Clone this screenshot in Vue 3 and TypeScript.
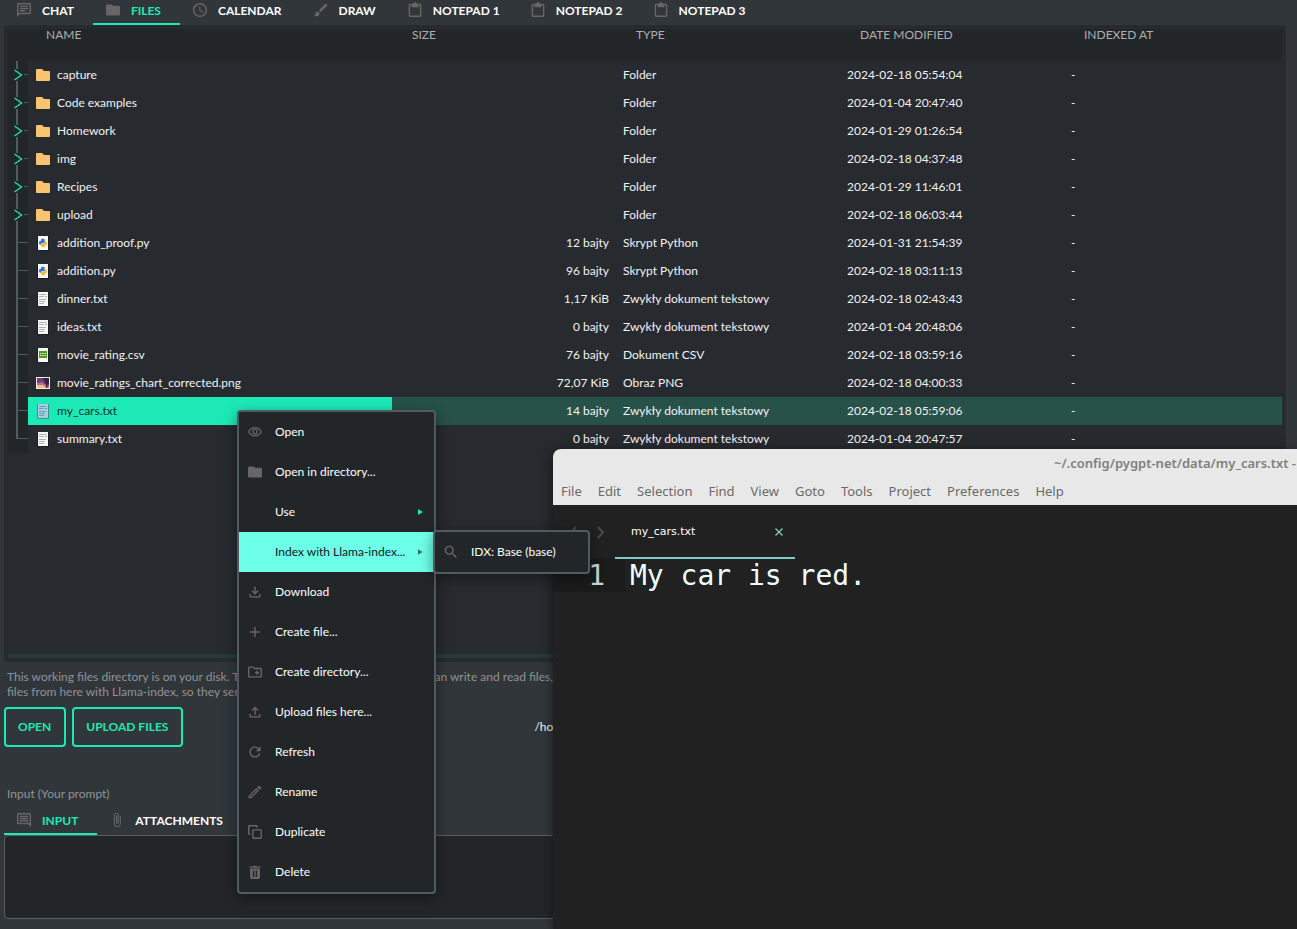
<script setup lang="ts">
import { ref } from 'vue'

interface FileRow {
  name: string
  kind: 'folder' | 'py' | 'txt' | 'csv' | 'png'
  size: string
  type: string
  modified: string
}

interface MenuItem {
  label: string
  icon?: string
  children?: { label: string; icon: string }[]
}

const icons: Record<string, string> = {
  chat: 'M4 4h16v12H5.17L4 17.17V4m0-2c-1.1 0-1.99.9-1.99 2L2 22l4-4h14c1.1 0 2-.9 2-2V4c0-1.1-.9-2-2-2H4zm2 10h8v2H6v-2zm0-3h12v2H6V9zm0-3h12v2H6V6z',
  folder: 'M10 4H4c-1.1 0-1.99.9-1.99 2L2 18c0 1.1.9 2 2 2h16c1.1 0 2-.9 2-2V8c0-1.1-.9-2-2-2h-8l-2-2z',
  clock: 'M11.99 2C6.47 2 2 6.48 2 12s4.47 10 9.99 10C17.52 22 22 17.52 22 12S17.52 2 11.99 2zM12 20c-4.42 0-8-3.58-8-8s3.58-8 8-8 8 3.58 8 8-3.58 8-8 8zm.5-13H11v6l5.25 3.15.75-1.23-4.5-2.67z',
  brush: 'M7 14c-1.66 0-3 1.34-3 3 0 1.31-1.16 2-2 2 .92 1.22 2.49 2 4 2 2.21 0 4-1.79 4-4 0-1.66-1.34-3-3-3zm13.71-9.37l-1.34-1.34c-.39-.39-1.02-.39-1.41 0L9 12.25 11.75 15l8.96-8.96c.39-.39.39-1.02 0-1.41z',
  clipboard: 'M19 3h-4.18C14.4 1.84 13.3 1 12 1c-1.3 0-2.4.84-2.82 2H5c-1.1 0-2 .9-2 2v15c0 1.1.9 2 2 2h14c1.1 0 2-.9 2-2V5c0-1.1-.9-2-2-2zm0 17H5V5h2v3h10V5h2v15z',
  comment: 'M21.99 4c0-1.1-.89-2-1.99-2H4c-1.1 0-2 .9-2 2v12c0 1.1.9 2 2 2h14l4 4-.01-18zM20 4v13.17L18.83 16H4V4h16zM6 12h12v2H6v-2zm0-3h12v2H6V9zm0-3h12v2H6V6z',
  clip: 'M17.5 6v11.5c0 2.76-2.24 5-5 5s-5-2.24-5-5V5c0-1.93 1.57-3.5 3.5-3.5s3.5 1.57 3.5 3.5v10.5c0 1.1-.9 2-2 2s-2-.9-2-2V6H12v9.5c0 .3.2.5.5.5s.5-.2.5-.5V5c0-1.1-.9-2-2-2s-2 .9-2 2v12.500c0 1.93 1.57 3.5 3.5 3.5s3.500-1.57 3.500-3.5V6h1.500z',
  eye: 'M12 6c3.79 0 7.17 2.13 8.82 5.5C19.17 14.87 15.79 17 12 17s-7.17-2.13-8.82-5.5C4.83 8.13 8.21 6 12 6m0-2C7 4 2.73 7.11 1 11.500 2.73 15.89 7 19 12 19s9.27-3.11 11-7.5C21.27 7.11 17 4 12 4zm0 5c1.38 0 2.5 1.12 2.5 2.5S13.38 14 12 14s-2.5-1.12-2.5-2.5S10.62 9 12 9m0-2c-2.48 0-4.5 2.02-4.5 4.5S9.52 16 12 16s4.5-2.02 4.5-4.5S14.48 7 12 7z',
  download: 'M18 15v3H6v-3H4v3c0 1.1.9 2 2 2h12c1.1 0 2-.9 2-2v-3h-2zm-1-4l-1.41-1.41L13 12.17V4h-2v8.17L8.41 9.59 7 11l5 5 5-5z',
  upload: 'M18 15v3H6v-3H4v3c0 1.1.9 2 2 2h12c1.1 0 2-.9 2-2v-3h-2zM7 9l1.41 1.41L11 7.83V16h2V7.83l2.59 2.58L17 9l-5-5-5 5z',
  plus: 'M19 13h-6v6h-2v-6H5v-2h6V5h2v6h6v2z',
  newFolder: 'M20 6h-8l-2-2H4c-1.11 0-1.99.89-1.99 2L2 18c0 1.11.89 2 2 2h16c1.11 0 2-.89 2-2V8c0-1.11-.89-2-2-2zm0 12H4V6h5.170l2 2H20v10zm-8-4h2v2h2v-2h2v-2h-2v-2h-2v2h-2v2z',
  refresh: 'M17.65 6.35C16.2 4.9 14.21 4 12 4c-4.42 0-7.99 3.58-7.99 8s3.57 8 7.99 8c3.73 0 6.84-2.55 7.73-6h-2.08c-.82 2.33-3.04 4-5.65 4-3.31 0-6-2.69-6-6s2.69-6 6-6c1.66 0 3.14.69 4.22 1.78L13 11h7V4l-2.35 2.35z',
  pencil: 'M14.06 9.02l.92.92L5.92 19H5v-.92l9.06-9.06M17.66 3c-.25 0-.51.1-.7.29l-1.83 1.83 3.75 3.75 1.83-1.83c.39-.39.39-1.02 0-1.41l-2.34-2.34c-.2-.2-.45-.29-.71-.29zm-3.6 3.19L3 17.25V21h3.75L17.81 9.94l-3.75-3.75z',
  copy: 'M10 8h10c1.1 0 2 .9 2 2v10c0 1.1-.9 2-2 2H10c-1.1 0-2-.9-2-2V10c0-1.1.9-2 2-2zm0 2v10h10V10H10zM4 2h10c1.1 0 2 .9 2 2v2h-2V4H4v10h2v2H4c-1.1 0-2-.9-2-2V4c0-1.1.9-2 2-2z',
  trash: 'M5 7h14v13c0 1.100-.9 2-2 2H7c-1.100 0-2-.9-2-2V7zm4 3v9h2v-9H9zm4 0v9h2v-9h-2zM4 4h5l1-1h4l1 1h5v2H4z',
  search: 'M15.5 14h-.79l-.28-.27C15.41 12.59 16 11.11 16 9.5 16 5.91 13.09 3 9.5 3S3 5.91 3 9.5 5.91 16 9.5 16c1.61 0 3.09-.59 4.23-1.57l.27.28v.79l5 4.99L20.49 19l-4.99-5zm-6 0C7.01 14 5 11.99 5 9.5S7.01 5 9.5 5 14 7.01 14 9.5 11.99 14 9.5 14z',
}

const tabs = [
  { label: 'CHAT', icon: 'chat' },
  { label: 'FILES', icon: 'folder' },
  { label: 'CALENDAR', icon: 'clock' },
  { label: 'DRAW', icon: 'brush' },
  { label: 'NOTEPAD 1', icon: 'clipboard' },
  { label: 'NOTEPAD 2', icon: 'clipboard' },
  { label: 'NOTEPAD 3', icon: 'clipboard' },
]
const activeTab = ref('FILES')

const inputTabs = [
  { label: 'INPUT', icon: 'comment' },
  { label: 'ATTACHMENTS', icon: 'clip' },
]
const activeInputTab = ref('INPUT')

const text = 'Zwykły dokument tekstowy'
const files: FileRow[] = [
  { name: 'capture', kind: 'folder', size: '', type: 'Folder', modified: '2024-02-18 05:54:04' },
  { name: 'Code examples', kind: 'folder', size: '', type: 'Folder', modified: '2024-01-04 20:47:40' },
  { name: 'Homework', kind: 'folder', size: '', type: 'Folder', modified: '2024-01-29 01:26:54' },
  { name: 'img', kind: 'folder', size: '', type: 'Folder', modified: '2024-02-18 04:37:48' },
  { name: 'Recipes', kind: 'folder', size: '', type: 'Folder', modified: '2024-01-29 11:46:01' },
  { name: 'upload', kind: 'folder', size: '', type: 'Folder', modified: '2024-02-18 06:03:44' },
  { name: 'addition_proof.py', kind: 'py', size: '12 bajty', type: 'Skrypt Python', modified: '2024-01-31 21:54:39' },
  { name: 'addition.py', kind: 'py', size: '96 bajty', type: 'Skrypt Python', modified: '2024-02-18 03:11:13' },
  { name: 'dinner.txt', kind: 'txt', size: '1,17 KiB', type: text, modified: '2024-02-18 02:43:43' },
  { name: 'ideas.txt', kind: 'txt', size: '0 bajty', type: text, modified: '2024-01-04 20:48:06' },
  { name: 'movie_rating.csv', kind: 'csv', size: '76 bajty', type: 'Dokument CSV', modified: '2024-02-18 03:59:16' },
  { name: 'movie_ratings_chart_corrected.png', kind: 'png', size: '72,07 KiB', type: 'Obraz PNG', modified: '2024-02-18 04:00:33' },
  { name: 'my_cars.txt', kind: 'txt', size: '14 bajty', type: text, modified: '2024-02-18 05:59:06' },
  { name: 'summary.txt', kind: 'txt', size: '0 bajty', type: text, modified: '2024-01-04 20:47:57' },
]
const selected = ref('my_cars.txt')

const menu: MenuItem[] = [
  { label: 'Open', icon: 'eye' },
  { label: 'Open in directory...', icon: 'folder' },
  { label: 'Use', children: [] },
  { label: 'Index with Llama-index...', children: [{ label: 'IDX: Base (base)', icon: 'search' }] },
  { label: 'Download', icon: 'download' },
  { label: 'Create file...', icon: 'plus' },
  { label: 'Create directory...', icon: 'newFolder' },
  { label: 'Upload files here...', icon: 'upload' },
  { label: 'Refresh', icon: 'refresh' },
  { label: 'Rename', icon: 'pencil' },
  { label: 'Duplicate', icon: 'copy' },
  { label: 'Delete', icon: 'trash' },
]
const openMenu = ref('Index with Llama-index...')

const editorMenu = ['File', 'Edit', 'Selection', 'Find', 'View', 'Goto', 'Tools', 'Project', 'Preferences', 'Help']
const prompt = ref('')
</script>

<template>
  <div class="app">
    <nav class="tabs" aria-label="Main">
      <button
        v-for="t in tabs"
        :key="t.label"
        class="tab"
        :class="{ active: t.label === activeTab, note: t.icon === 'clipboard' }"
        @click="activeTab = t.label"
      >
        <svg class="icon" viewBox="2 2 20 20"><path :d="icons[t.icon]" /></svg>
        <span>{{ t.label }}</span>
      </button>
    </nav>

    <section class="panel">
      <table class="files">
        <colgroup>
          <col class="c-name" /><col class="c-mid" /><col class="c-mid" /><col class="c-mid" /><col />
        </colgroup>
        <thead>
          <tr>
            <th class="h-name">NAME</th>
            <th>SIZE</th>
            <th>TYPE</th>
            <th>DATE MODIFIED</th>
            <th>INDEXED AT</th>
          </tr>
        </thead>
        <tbody>
          <tr
            v-for="(f, i) in files"
            :key="f.name"
            :class="{ selected: f.name === selected }"
            @click="selected = f.name"
          >
            <td class="name-cell">
              <div class="name">
                <svg class="branch" viewBox="0 0 20 28">
                  <template v-if="f.kind === 'folder'">
                    <path class="line" d="M9 0V8M9 20V28" />
                    <path class="stub" d="M16 13.500H20" />
                    <path class="chevron" d="M6.500 9L13.500 14L6.500 19" />
                  </template>
                  <template v-else>
                    <path class="line" :d="i === files.length - 1 ? 'M9 0V14' : 'M9 0V28'" />
                    <path class="stub" d="M10 13.500H20" />
                  </template>
                </svg>
                <span class="label">
                  <svg class="file-icon" viewBox="0 0 14 16">
                    <path v-if="f.kind === 'folder'" fill="#f9c470" d="M0 3a1 1 0 0 1 1-1H6l2 2h5a1 1 0 0 1 1 1v8a1 1 0 0 1-1 1H1a1 1 0 0 1-1-1z" />
                    <template v-else-if="f.kind === 'png'">
                      <rect x="0" y="2" width="14" height="12" fill="#f3ece8" />
                      <rect x="1" y="3" width="12" height="10" fill="#6d4478" />
                      <path d="M1 8l5-1 7 4v2H1z" fill="#b8688c" />
                      <path d="M1 10h6l4 3H1z" fill="#f2bd86" />
                      <path d="M6 4l3-1h4v7l-1-2-1 5h-1V8L8 9l1-3z" fill="#35203f" />
                    </template>
                    <template v-else>
                      <rect x="1" y="1" width="12" height="15" rx="1" :fill="f.name === selected ? '#3d8f95' : '#191b1e'" />
                      <rect x="2" y="1" width="10" height="14" :fill="f.name === selected ? '#a3cfdf' : '#f7f7f7'" />
                      <template v-if="f.kind === 'py'">
                        <path d="M3 7.500C3 6.500 3.500 6 4.500 6H5V5c0-.8.7-1.300 1.800-1.300S8.700 4.200 8.700 5v2c0 .8-.5 1.200-1.200 1.200H6c-.8 0-1.200.5-1.200 1.800C3.500 10 3 9 3 7.500z" fill="#3573d9" />
                        <path d="M11 8.500c0 1-.5 1.700-1.500 1.700H9v.8c0 .8-.7 1.300-1.800 1.300S5.300 11.800 5.300 11V9.800c0-.8.5-1.200 1.200-1.200H8c.8 0 1.200-.5 1.200-2.300C10.500 6.200 11 7 11 8.500z" fill="#f7b82e" />
                      </template>
                      <path
                        v-else-if="f.kind === 'txt'"
                        d="M3 3.500H10M3 5.500H8M3 8.500H10M3 10.500H9M3 12.500H8M9 5.500H11"
                        :stroke="f.name === selected ? '#6f9fb4' : '#b0b0b0'"
                        fill="none"
                      />
                      <template v-else>
                        <rect x="3" y="4" width="8" height="7" fill="#4f9a1c" />
                        <path d="M4 6.500H10M4 8.500H10" stroke="#d9f2c5" stroke-dasharray="1.500 .7" fill="none" />
                      </template>
                    </template>
                  </svg>
                  {{ f.name }}
                </span>
              </div>
            </td>
            <td class="size">{{ f.size }}</td>
            <td>{{ f.type }}</td>
            <td>{{ f.modified }}</td>
            <td>-</td>
          </tr>
        </tbody>
      </table>
      <div class="scrollbar"></div>
    </section>

    <p class="info">
      This working files directory is on your disk. These files are used by the models. It can write and read files,<br />
      files from here with Llama-index, so they serve as additional knowledge.
    </p>

    <div class="actions">
      <button class="outlined">OPEN</button>
      <button class="outlined">UPLOAD FILES</button>
      <span class="path">/home/user/.config/pygpt-net/data</span>
    </div>

    <label class="prompt-label" for="prompt">Input (Your prompt)</label>
    <div class="tabs">
      <button
        v-for="t in inputTabs"
        :key="t.label"
        class="tab"
        :class="{ active: t.label === activeInputTab }"
        @click="activeInputTab = t.label"
      >
        <svg class="icon" viewBox="2 2 20 20"><path :d="icons[t.icon]" /></svg>
        <span>{{ t.label }}</span>
      </button>
    </div>
    <textarea id="prompt" v-model="prompt" class="prompt"></textarea>

    <section class="editor">
      <header class="titlebar">
        <div class="title">~/.config/pygpt-net/data/my_cars.txt - Sublime Text</div>
        <nav class="menubar">
          <button v-for="m in editorMenu" :key="m">{{ m }}</button>
        </nav>
      </header>
      <div class="editor-tabs">
        <svg class="arrows" viewBox="0 0 62 54">
          <path d="M23 22L18 27.500L23 33M45 22L50 27.500L45 33" />
        </svg>
        <div class="editor-tab">
          <span>my_cars.txt</span>
          <button aria-label="Close tab">
            <svg viewBox="0 0 8 8"><path d="M.5 .5L7.500 7.500M7.500 .5L.5 7.500" /></svg>
          </button>
        </div>
      </div>
      <div class="code-line">
        <span class="gutter">1</span>
        <code>My car is red.</code>
      </div>
    </section>

    <ul class="menu context">
      <li v-for="m in menu" :key="m.label" :class="{ open: m.label === openMenu }">
        <button class="item">
          <svg class="icon" :viewBox="m.icon === 'eye' ? '1 1 22 22' : '2 2 20 20'">
            <path v-if="m.icon" :d="icons[m.icon]" />
          </svg>
          <span>{{ m.label }}</span>
          <svg v-if="m.children" class="more" viewBox="0 0 5 6"><path d="M0 0L5 3L0 6z" /></svg>
        </button>
        <ul v-if="m.label === openMenu && m.children" class="menu submenu">
          <li v-for="c in m.children" :key="c.label">
            <button class="item">
              <svg class="icon" viewBox="2 2 20 20"><path :d="icons[c.icon]" /></svg>
              <span>{{ c.label }}</span>
            </button>
          </li>
        </ul>
      </li>
    </ul>
  </div>
</template>

<style>
body {
  background: #31363b;
}
</style>

<style scoped>
.app {
  position: relative;
  display: flex;
  flex-direction: column;
  box-sizing: border-box;
  height: 100vh;
  padding: 0 11px 10px 4px;
  overflow: hidden;
  background: #31363b;
  color: #f2f2f2;
  font: 12px/16px Lato, "Noto Sans", sans-serif;
}
button {
  margin: 0;
  padding: 0;
  border: 0;
  background: none;
  color: inherit;
  font: inherit;
  text-align: left;
}
.icon {
  flex: none;
  width: 14px;
  height: 14px;
  fill: #666;
  fill-rule: evenodd;
  overflow: visible;
}

.tabs {
  display: flex;
  flex: none;
  height: 25px;
}
.tab {
  display: flex;
  align-items: center;
  gap: 11px;
  box-sizing: border-box;
  padding: 0 19px 3px 13px;
  border-bottom: 2px solid transparent;
  color: #fff;
  font-weight: 700;
}
.tab.note {
  padding-right: 18px;
}
.tab span {
  padding-top: 2px;
}
.tab.active {
  border-color: #1de9b6;
  color: #1de9b6;
}

.panel {
  display: flex;
  flex: 1;
  flex-direction: column;
  justify-content: space-between;
  min-height: 0;
  padding: 4px;
  border-radius: 4px;
  background: #272a2e;
}
.files {
  width: 100%;
  border-collapse: collapse;
  table-layout: fixed;
}
.c-name {
  width: 384px;
}
.c-mid {
  width: 224px;
}
th {
  height: 32px;
  box-sizing: border-box;
  padding: 0 20px 20px;
  background: #232629;
  color: #adaeaf;
  font-weight: 400;
  line-height: 12px;
  text-align: left;
}
.h-name {
  padding-left: 38px;
}
td {
  height: 28px;
  padding: 0 7px;
  white-space: nowrap;
}
.size {
  text-align: right;
}
.name-cell {
  padding: 0;
}
.name {
  display: flex;
  height: 28px;
}
.branch {
  flex: none;
  width: 20px;
  height: 28px;
  background: #232629;
  fill: none;
}
.line {
  stroke: #4f5b62;
  stroke-width: 2;
}
.stub {
  stroke: #4f5b62;
}
.chevron {
  stroke: #1de9b6;
  stroke-width: 1.3;
}
.label {
  display: flex;
  flex: 1;
  align-items: center;
  gap: 7px;
  padding-left: 8px;
}
.file-icon {
  width: 14px;
  height: 16px;
}
.selected td {
  background: #26524a;
}
.selected .label {
  background: #1de9b6;
  color: #12302a;
}
.scrollbar {
  height: 4px;
  background: #243b38;
}

.info {
  flex: none;
  margin: 7px 3px 8px;
  color: #909395;
  line-height: 15px;
  white-space: nowrap;
}
.actions {
  display: flex;
  flex: none;
  align-items: center;
  gap: 6px;
}
.outlined {
  height: 40px;
  padding: 0 13px 0 12px;
  border: 2px solid #1de9b6;
  border-radius: 4px;
  color: #1de9b6;
  font-weight: 700;
}
.path {
  margin-left: 345px;
}
.prompt-label {
  flex: none;
  margin: 39px 3px 8px;
  color: #909395;
}
.prompt {
  flex: none;
  box-sizing: border-box;
  height: 84px;
  padding: 8px;
  border: 1px solid #5b5e60;
  border-radius: 4px;
  background: #232629;
  color: #fff;
  font: inherit;
  resize: none;
}

.menu {
  box-sizing: border-box;
  margin: 0;
  padding: 0;
  border: 2px solid #4f5b62;
  border-radius: 4px;
  background: #232629;
  list-style: none;
  box-shadow: 0 4px 14px rgba(0, 0, 0, 0.4);
}
.menu li {
  position: relative;
}
.context {
  position: absolute;
  top: 410px;
  left: 237px;
  width: 199px;
}
.submenu {
  position: absolute;
  top: -2px;
  left: calc(100% - 1px);
  width: 157px;
}
.item {
  display: flex;
  align-items: center;
  gap: 13px;
  width: 100%;
  height: 40px;
  padding: 0 11px 0 9px;
  color: #fff;
  white-space: nowrap;
}
.open > .item {
  background: #6effe8;
  color: #10201e;
}
.more {
  width: 5px;
  height: 6px;
  margin-left: auto;
  fill: #1de9b6;
}
.open .more {
  fill: #3c6f69;
}

.editor {
  position: absolute;
  inset: 449px 0 0 553px;
  overflow: hidden;
  border-top-left-radius: 8px;
  background: #212121;
  box-shadow: 0 2px 12px rgba(0, 0, 0, 0.5);
}
.titlebar {
  height: 56px;
  background: #e8e8e8;
  color: #6a6a6a;
  font: 13px/28px "Noto Sans", sans-serif;
}
.title {
  padding-left: 501px;
  color: #808080;
  font-weight: 600;
  white-space: nowrap;
}
.menubar {
  display: flex;
  gap: 16px;
  padding-left: 8px;
}
.editor-tabs {
  display: flex;
  height: 54px;
}
.arrows {
  width: 62px;
  height: 54px;
  fill: none;
  stroke: #4a4a4a;
  stroke-width: 2;
}
.editor-tab {
  display: flex;
  align-items: center;
  justify-content: space-between;
  box-sizing: border-box;
  width: 180px;
  padding: 2px 12px 0 16px;
  border-bottom: 2px solid #80cbc4;
  color: #fff;
  font: 11px/16px "DejaVu Sans", sans-serif;
}
.editor-tab svg {
  display: block;
  width: 8px;
  height: 8px;
  stroke: #80cbc4;
  stroke-width: 1.3;
}
.code-line {
  display: flex;
  color: #eeffff;
  font: 28px/33px "DejaVu Sans Mono", monospace;
}
.gutter {
  box-sizing: border-box;
  width: 72px;
  padding-right: 20px;
  background: #1b1b1b;
  color: #c3d3d6;
  text-align: right;
}
.code-line code {
  padding-left: 5px;
  font: inherit;
}
</style>
